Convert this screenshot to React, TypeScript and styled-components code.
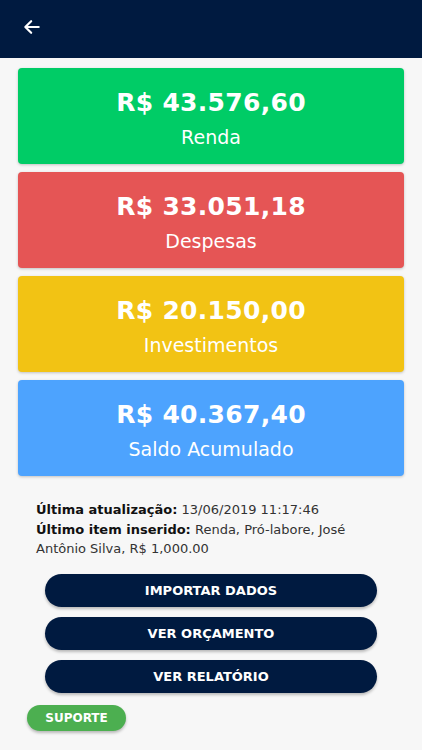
import React from 'react'
import styled, { createGlobalStyle } from 'styled-components'

const GlobalStyle = createGlobalStyle`
    html, body {
        margin: 0;
        padding: 0;
        background: #f7f7f7;
        font-family: "DejaVu Sans", "Open Sans", sans-serif;
    }
`

type Summary = { value: string; label: string; color: string }

const summaries: Summary[] = [
    { value: 'R$ 43.576,60', label: 'Renda', color: '#00cc66' },
    { value: 'R$ 33.051,18', label: 'Despesas', color: '#e55555' },
    { value: 'R$ 20.150,00', label: 'Investimentos', color: '#f2c314' },
    { value: 'R$ 40.367,40', label: 'Saldo Acumulado', color: '#4da3fe' },
]

const App: React.FC = () => {
    return (
        <Page>
            <GlobalStyle />
            <TopBar>
                <BackButton aria-label="Voltar">
                    <svg width="20" height="20" viewBox="0 0 24 24" fill="none" stroke="#ffffff" strokeWidth="2.6" strokeLinecap="round" strokeLinejoin="round">
                        <path d="M20 12H5" />
                        <path d="M11 5l-7 7 7 7" />
                    </svg>
                </BackButton>
            </TopBar>
            <Cards>
                {summaries.map(s => (
                    <Card key={s.label} $color={s.color}>
                        <Amount>{s.value}</Amount>
                        <Label>{s.label}</Label>
                    </Card>
                ))}
            </Cards>
            <Info>
                <InfoLine><b>Última atualização:</b> 13/06/2019 11:17:46</InfoLine>
                <InfoLine><b>Último item inserido:</b> Renda, Pró-labore, José Antônio Silva, R$ 1,000.00</InfoLine>
            </Info>
            <Actions>
                <ActionButton>IMPORTAR DADOS</ActionButton>
                <ActionButton>VER ORÇAMENTO</ActionButton>
                <ActionButton>VER RELATÓRIO</ActionButton>
            </Actions>
            <Footer>
                <SupportButton>SUPORTE</SupportButton>
            </Footer>
        </Page>
    )
}

const Page = styled.div`
    width: 422px;
    min-height: 750px;
    background: #f7f7f7;
    display: flex;
    flex-direction: column;
`

const TopBar = styled.header`
    height: 58px;
    background: #001a40;
    display: flex;
    align-items: center;
    padding: 0 0 4px 22px;
    box-sizing: border-box;
`

const BackButton = styled.button`
    background: none;
    border: none;
    padding: 0;
    display: flex;
    cursor: pointer;
`

const Cards = styled.div`
    display: flex;
    flex-direction: column;
    gap: 8px;
    padding: 10px 18px 0;
`

const Card = styled.div<{ $color: string }>`
    height: 96px;
    box-sizing: border-box;
    padding-top: 5px;
    background: ${p => p.$color};
    border-radius: 4px;
    box-shadow: 0 1px 3px rgba(0, 0, 0, 0.22);
    display: flex;
    flex-direction: column;
    align-items: center;
    justify-content: center;
    color: #ffffff;
`

const Amount = styled.div`
    font-size: 25px;
    font-weight: 700;
    letter-spacing: 0.3px;
    line-height: 32px;
`

const Label = styled.div`
    font-size: 19px;
    line-height: 26px;
    margin-top: 5px;
`

const Info = styled.div`
    padding: 24px 36px 0;
    color: #333333;
    font-size: 13px;
    line-height: 19.5px;
`

const InfoLine = styled.div`
    b {
        color: #111111;
        font-weight: 700;
    }
`

const Actions = styled.div`
    display: flex;
    flex-direction: column;
    gap: 10px;
    padding: 15px 45px 0;
`

const ActionButton = styled.button`
    height: 33px;
    border: none;
    border-radius: 17px;
    background: #001a40;
    color: #ffffff;
    font-family: inherit;
    font-size: 13px;
    font-weight: 700;
    box-shadow: 0 2px 3px rgba(0, 0, 0, 0.25);
`

const Footer = styled.div`
    padding: 12px 27px 0;
`

const SupportButton = styled.button`
    width: 99px;
    height: 26px;
    border: none;
    border-radius: 13px;
    background: #4caf50;
    color: #ffffff;
    font-family: inherit;
    font-size: 12px;
    font-weight: 700;
    box-shadow: 0 2px 3px rgba(0, 0, 0, 0.25);
`

export default App
